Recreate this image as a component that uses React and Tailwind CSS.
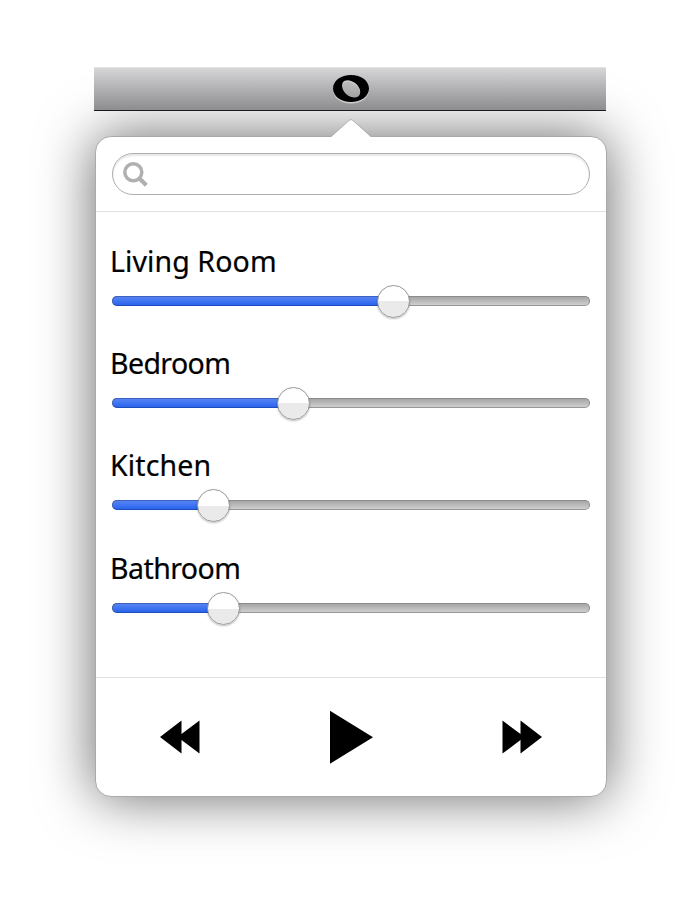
const rooms = [
  { name: "Living Room", level: 281, gap: "h-[102px]", tracking: "tracking-[0.1px]" },
  { name: "Bedroom", level: 181, gap: "h-[102px]", tracking: "tracking-[-0.6px]" },
  { name: "Kitchen", level: 101, gap: "h-[103px]", tracking: "tracking-[0.15px]" },
  { name: "Bathroom", level: 111, gap: "h-[102px]", tracking: "tracking-[-0.55px]" },
];

const RING =
  "M1 13.500C1 5.800 9 0 19 0s18 5.800 18 13.500S29 27 19 27 1 21.200 1 13.500ZM10.800 7.500C8.800 11 11 16.500 15 19.800S25.500 23.600 27.500 20 27.300 11 22.700 7.700 12.800 4.300 10.800 7.500Z";

function VolumeSlider({ level }) {
  return (
    <div className="relative ml-4 mt-[14px] h-[10px] w-[478px] rounded-full border border-[#8b8b8b] border-b-[#979797] bg-linear-to-b from-[#a6a6a6] to-[#cfcfcf]">
      <div
        className="absolute -left-px -top-px h-[10px] rounded-l-full border border-r-0 border-[#3d62c0] border-b-[#1d4dbd] bg-linear-to-b from-[#5683f3] to-[#2864ed]"
        style={{ width: level }}
      />
      <div
        className="absolute -top-[12.5px] size-[33px] rounded-full border border-[#999] bg-[linear-gradient(#fff_50%,#eaeaea_50%)] shadow-[0_1px_2px_rgba(0,0,0,0.25)]"
        style={{ left: level - 17.5 }}
      />
    </div>
  );
}

function Transport() {
  return (
    <div className="flex h-[118px] items-center justify-between border-t border-[#e1e1e1] pl-[64px] pr-[64px]">
      <button aria-label="Previous">
        <svg className="block h-[34px] w-[40px]" viewBox="0 0 40 34">
          <path d="M0 17 21.500.5V14L39.500.5v33L21.500 20v13.500Z" />
        </svg>
      </button>
      <button aria-label="Play">
        <svg className="block h-[54px] w-[44px]" viewBox="0 0 44 54">
          <path d="M1 .8 44 27.300 1 53.800Z" />
        </svg>
      </button>
      <button aria-label="Next">
        <svg className="block h-[34px] w-[40px]" viewBox="0 0 40 34">
          <path d="M40 17 18.500.5V14L.5.5v33L18.500 20v13.500Z" />
        </svg>
      </button>
    </div>
  );
}

export default function App() {
  return (
    <div className="h-[902px] w-[694px] overflow-hidden bg-white pt-[67px]">
      <header className="relative z-10 ml-[94px] flex h-11 w-[512px] justify-center border-b border-t border-b-[#1a1a1a] border-t-[#e3e3e4] bg-linear-to-b from-[#d6d6d8] to-[#8d8d8f]">
        <svg className="ml-[2px] mt-[7px] block h-[29px] w-[38px]" viewBox="0 0 38 29">
          <path fillRule="evenodd" d={RING} transform="translate(0 1.500)" fill="#cfcfd1" />
          <path fillRule="evenodd" d={RING} />
        </svg>
      </header>
      <main className="relative ml-[95px] mt-[25px] h-[661px] w-[512px] rounded-[16px] border border-[#aaa] bg-white shadow-[0_0_56px_rgba(0,0,0,0.6)]">
        <svg className="absolute left-[234px] -top-[19px] h-[20px] w-[42px]" viewBox="0 0 42 20">
          <path d="M.500 19.500 19 2.800Q21 .7 23 2.800L41.500 19.500Z" fill="#fff" />
          <path d="M1 18.500 19 2.500Q21 .5 23 2.500L41 18.500" fill="none" stroke="#aaa" strokeWidth=".8" />
        </svg>
        <div className="h-[75px] border-b border-[#e1e1e1] px-4 pt-4">
          <div className="flex h-[42px] rounded-full border border-[#afafaf] pl-[10px] pt-2 shadow-[inset_0_2px_2px_rgba(0,0,0,0.1)]">
            <svg className="block size-[26px]" viewBox="0 0 26 26" fill="none" stroke="#b0b0b0">
              <circle cx="10.300" cy="10.300" r="8.500" strokeWidth="3.500" />
              <path d="m16 16 7.300 7.300" strokeWidth="4.200" />
            </svg>
          </div>
        </div>
        <div className="h-[465px] pt-[30px]">
          {rooms.map((room) => (
            <section key={room.name} className={room.gap}>
              <h2
                className={`ml-[14px] h-10 whitespace-nowrap font-['Noto_Sans','Open_Sans',sans-serif] text-[28.5px] leading-[38px] font-normal text-black [-webkit-text-stroke:0.2px_black] ${room.tracking}`}
              >
                {room.name}
              </h2>
              <VolumeSlider level={room.level} />
            </section>
          ))}
        </div>
        <Transport />
      </main>
    </div>
  );
}
